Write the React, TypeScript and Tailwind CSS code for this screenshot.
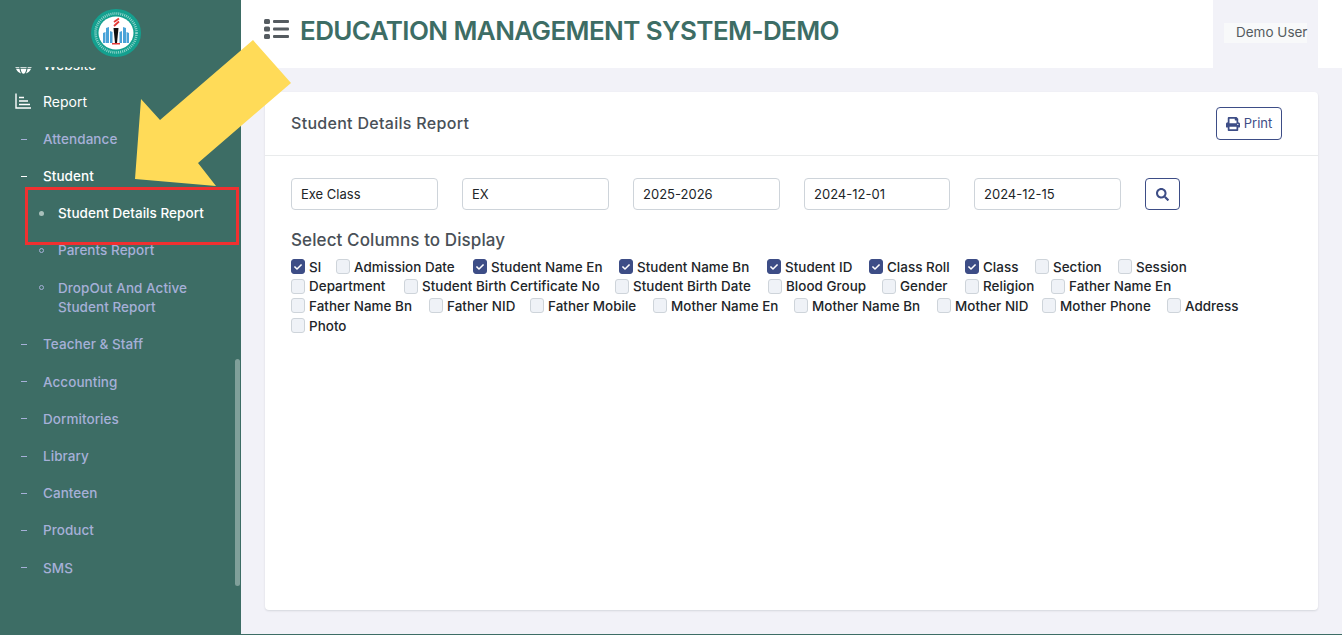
import { FaCheck, FaGlobe, FaPrint, FaSearch } from 'react-icons/fa';

const subMenus = [
  { label: 'Attendance', top: 'mt-[19px]' },
  { label: 'Student', active: true, top: 'mt-[18px]' },
];

const lowerMenus = ['Teacher & Staff', 'Accounting', 'Dormitories', 'Library', 'Canteen', 'Product', 'SMS'];

const filters = [
  { value: 'Exe Class', width: 'w-[147px]' },
  { value: 'EX', width: 'w-[147px]' },
  { value: '2025-2026', width: 'w-[147px]' },
  { value: '2024-12-01', width: 'w-[146px]' },
  { value: '2024-12-15', width: 'w-[147px]' },
];

const columnRows = [
  [
    { label: 'Sl', checked: true, width: 'w-[45px]' },
    { label: 'Admission Date', width: 'w-[137px]' },
    { label: 'Student Name En', checked: true, width: 'w-[146px]' },
    { label: 'Student Name Bn', checked: true, width: 'w-[148px]' },
    { label: 'Student ID', checked: true, width: 'w-[102px]' },
    { label: 'Class Roll', checked: true, width: 'w-[96px]' },
    { label: 'Class', checked: true, width: 'w-[70px]' },
    { label: 'Section', width: 'w-[83px]' },
    { label: 'Session', width: 'w-[90px]' },
  ],
  [
    { label: 'Department', width: 'w-[113px]' },
    { label: 'Student Birth Certificate No', width: 'w-[211px]' },
    { label: 'Student Birth Date', width: 'w-[153px]' },
    { label: 'Blood Group', width: 'w-[114px]' },
    { label: 'Gender', width: 'w-[83px]' },
    { label: 'Religion', width: 'w-[86px]' },
    { label: 'Father Name En', width: 'w-[130px]' },
  ],
  [
    { label: 'Father Name Bn', width: 'w-[138px]' },
    { label: 'Father NID', width: 'w-[101px]' },
    { label: 'Father Mobile', width: 'w-[123px]' },
    { label: 'Mother Name En', width: 'w-[141px]' },
    { label: 'Mother Name Bn', width: 'w-[143px]' },
    { label: 'Mother NID', width: 'w-[105px]' },
    { label: 'Mother Phone', width: 'w-[125px]' },
    { label: 'Address', width: 'w-[80px]' },
  ],
  [{ label: 'Photo', width: 'w-[60px]' }],
];

function Logo() {
  return (
    <svg viewBox="0 0 50 48" className="w-[50px] h-[48px]">
      <ellipse cx="25" cy="24" rx="25" ry="24" fill="#14a08f" />
      <ellipse cx="25" cy="24" rx="20.5" ry="19.5" fill="none" stroke="#c4ebe5" strokeWidth="2.6" strokeDasharray="1 1" opacity="0.7" />
      <ellipse cx="25" cy="24" rx="17.5" ry="16.5" fill="#fff" />
      <path d="M12 34V24l2.500-1v11zM15 34V19l3-1v16zM19 34V22l2.500 1v11zM28.500 34V23l2.500-1v12zM32 34V18l3 1v15zM35.500 34V23l2.500 1v10z" fill="#4aa3d8" />
      <path d="M22.500 19h5l-1.500 15h-2z" fill="#111" />
      <path d="M21 34h8v1.500h-8z" fill="#e53935" />
      <path d="M23 13l5-3.500M23 17l5-4.500" fill="none" stroke="#e53935" strokeWidth="1.8" />
    </svg>
  );
}

function ListIcon() {
  return (
    <svg viewBox="0 0 25 20" className="w-[25px] h-[20px]" fill="#555b60">
      <rect x="0" y="0" width="6" height="5" rx="1.500" />
      <rect x="0" y="7.500" width="6" height="5" rx="1.500" />
      <rect x="0" y="15" width="6" height="5" rx="1.500" />
      <rect x="9" y="1" width="16" height="3" rx="1" />
      <rect x="9" y="8.500" width="16" height="3" rx="1" />
      <rect x="9" y="16" width="16" height="3" rx="1" />
    </svg>
  );
}

function ReportIcon() {
  return (
    <svg viewBox="0 0 16 16" className="w-4 h-4" fill="none" stroke="#fff" strokeWidth="1.4">
      <path d="M1 0.500V15H16" />
      <path d="M4 4.500H9M4 8H13M4 11.500H15" strokeWidth="1.500" />
    </svg>
  );
}

function Checkbox({ checked }: { checked?: boolean }) {
  return (
    <span
      className={`w-[14px] h-[15px] shrink-0 rounded-[3px] border flex items-center justify-center ${
        checked ? 'bg-[#3d4d86] border-[#3d4d86]' : 'bg-[#eff2f7] border-[#ced4da]'
      }`}
    >
      {checked && <FaCheck className="w-2 h-2 text-white" />}
    </span>
  );
}

export default function App() {
  return (
    <div className="relative flex h-[635px] w-[1342px] overflow-hidden bg-[#3d6d65] font-['Inter','Liberation_Sans',sans-serif]">
      {/* Sidebar */}
      <aside className="relative w-[241px] shrink-0 flex flex-col overflow-hidden">
        <div className="h-[67px] shrink-0 flex justify-center pt-[9px] pr-[9px]">
          <Logo />
        </div>
        <div className="flex-1 overflow-hidden">
          <div className="-mt-[13px]">
            <div className="flex items-center h-[20px] pl-[15px]">
              <FaGlobe className="w-[17px] h-[17px] mt-[2px] text-white" />
              <span className="ml-[11px] text-[14px] text-white">Website</span>
            </div>
            <div className="flex items-center h-[20px] mt-[17px] pl-[15px]">
              <ReportIcon />
              <span className="ml-[12px] text-[14px] text-white">Report</span>
            </div>
            {subMenus.map(item => (
              <div key={item.label} className={`flex items-center h-[19px] pl-[21px] ${item.top}`}>
                <span className={`w-[6px] h-px ${item.active ? 'bg-white' : 'bg-[#a6b0d8]'}`} />
                <span className={`ml-[16px] text-[13.5px] tracking-[0.05px] font-medium ${item.active ? 'text-white' : 'text-[#a6b0d8]'}`}>
                  {item.label}
                </span>
              </div>
            ))}
            <div className="flex items-center h-[19px] mt-[18px] pl-[39px]">
              <span className="w-[5px] h-[5px] rounded-full bg-[#a9c0bb]" />
              <span className="ml-[14px] text-[13.5px] tracking-[0.05px] font-medium text-white">Student Details Report</span>
            </div>
            <div className="flex items-center h-[19px] mt-[18px] pl-[39px]">
              <span className="w-[5px] h-[5px] rounded-full border border-[#a6b0d8]" />
              <span className="ml-[14px] text-[13.5px] tracking-[0.05px] font-medium text-[#a6b0d8]">Parents Report</span>
            </div>
            <div className="flex mt-[19px] pl-[39px]">
              <span className="w-[5px] h-[5px] mt-[6px] rounded-full border border-[#a6b0d8]" />
              <span className="ml-[14px] w-[160px] text-[13.5px] tracking-[0.05px] leading-[19px] font-medium text-[#a6b0d8]">
                DropOut And Active Student Report
              </span>
            </div>
            {lowerMenus.map((label, i) => (
              <div key={label} className={`flex items-center h-[19px] pl-[21px] ${i === 0 ? 'mt-[18px]' : 'mt-[18.2px]'}`}>
                <span className="w-[6px] h-px bg-[#a6b0d8]" />
                <span className="ml-[16px] text-[13.5px] tracking-[0.05px] font-medium text-[#a6b0d8]">{label}</span>
              </div>
            ))}
          </div>
        </div>
        <div className="absolute left-[235px] top-[359px] w-[5px] h-[227px] rounded-full bg-white/35" />
      </aside>

      {/* Main */}
      <div className="flex-1 h-[634px] flex flex-col bg-[#f2f2f8]">
        <header className="h-[68px] shrink-0 bg-white flex items-center pl-[23px]">
          <div className="mb-[10px]">
            <ListIcon />
          </div>
          <h1 className="ml-[11px] mb-[7px] text-[26px] tracking-[-0.6px] font-semibold text-[#3d6d65] whitespace-nowrap">
            EDUCATION MANAGEMENT SYSTEM-DEMO
          </h1>
          <div className="ml-auto mr-[24px] w-[105px] h-full bg-[#f2f2f8] flex items-center justify-end pr-[11px]">
            <span className="w-[83px] h-[20px] mb-[2px] bg-[#f8f9fa] pl-[12px] text-[13.5px] leading-[19px] text-[#555b60] whitespace-nowrap">
              Demo User
            </span>
          </div>
        </header>

        <main className="flex-1 px-[24px] pt-[24px] pb-[24px]">
          <section className="h-full bg-white rounded-[4px] shadow-[0_1px_2px_rgba(56,65,74,0.15)]">
            <div className="h-[64px] border-b border-[#e9ebec] flex items-center justify-between pl-[26px] pr-[36px]">
              <h2 className="mb-[1px] text-[16px] tracking-[0.3px] font-medium text-[#495057]">Student Details Report</h2>
              <button className="w-[66px] h-[33px] rounded-[4px] border border-[#3d4d86] flex items-center justify-center gap-[4px] text-[13px] text-[#3d4d86]">
                <FaPrint className="w-[14px] h-[14px]" />
                Print
              </button>
            </div>
            <div className="px-[26px] pt-[22px]">
              <div className="flex gap-[24px]">
                {filters.map(f => (
                  <input
                    key={f.value}
                    readOnly
                    value={f.value}
                    className={`${f.width} h-[32px] rounded-[4px] border border-[#ced4da] pl-[9px] pr-[10px] pb-[1px] text-[13px] text-[#212529] outline-none`}
                  />
                ))}
                <button className="w-[35px] h-[32px] rounded-[4px] border border-[#3d4d86] flex items-center justify-center text-[#3d4d86]">
                  <FaSearch className="w-[13px] h-[13px]" />
                </button>
              </div>
              <h3 className="mt-[20px] h-[20px] text-[17px] tracking-[0.1px] leading-[20px] font-medium text-[#495057]">
                Select Columns to Display
              </h3>
              <div className="mt-[7px]">
                {columnRows.map(row => (
                  <div key={row[0].label} className="flex h-[19.6px] items-center">
                    {row.map(col => (
                      <label key={col.label} className={`flex items-center gap-[4px] shrink-0 ${col.width}`}>
                        <Checkbox checked={col.checked} />
                        <span className="text-[13.4px] tracking-[0.05px] font-medium text-[#212529] whitespace-nowrap">{col.label}</span>
                      </label>
                    ))}
                  </div>
                ))}
              </div>
            </div>
          </section>
        </main>
      </div>

      {/* Annotation drawn over the screenshot */}
      <div className="absolute left-[25px] top-[187px] w-[214px] h-[58px] border-[3px] border-[#f03030]" />
      <svg className="absolute left-0 top-0 w-[300px] h-[200px]" viewBox="0 0 300 200">
        <polygon points="253,40 291,83 198,163 216,186 135,179 141,99 160,120" fill="#ffdb58" />
      </svg>
    </div>
  );
}
